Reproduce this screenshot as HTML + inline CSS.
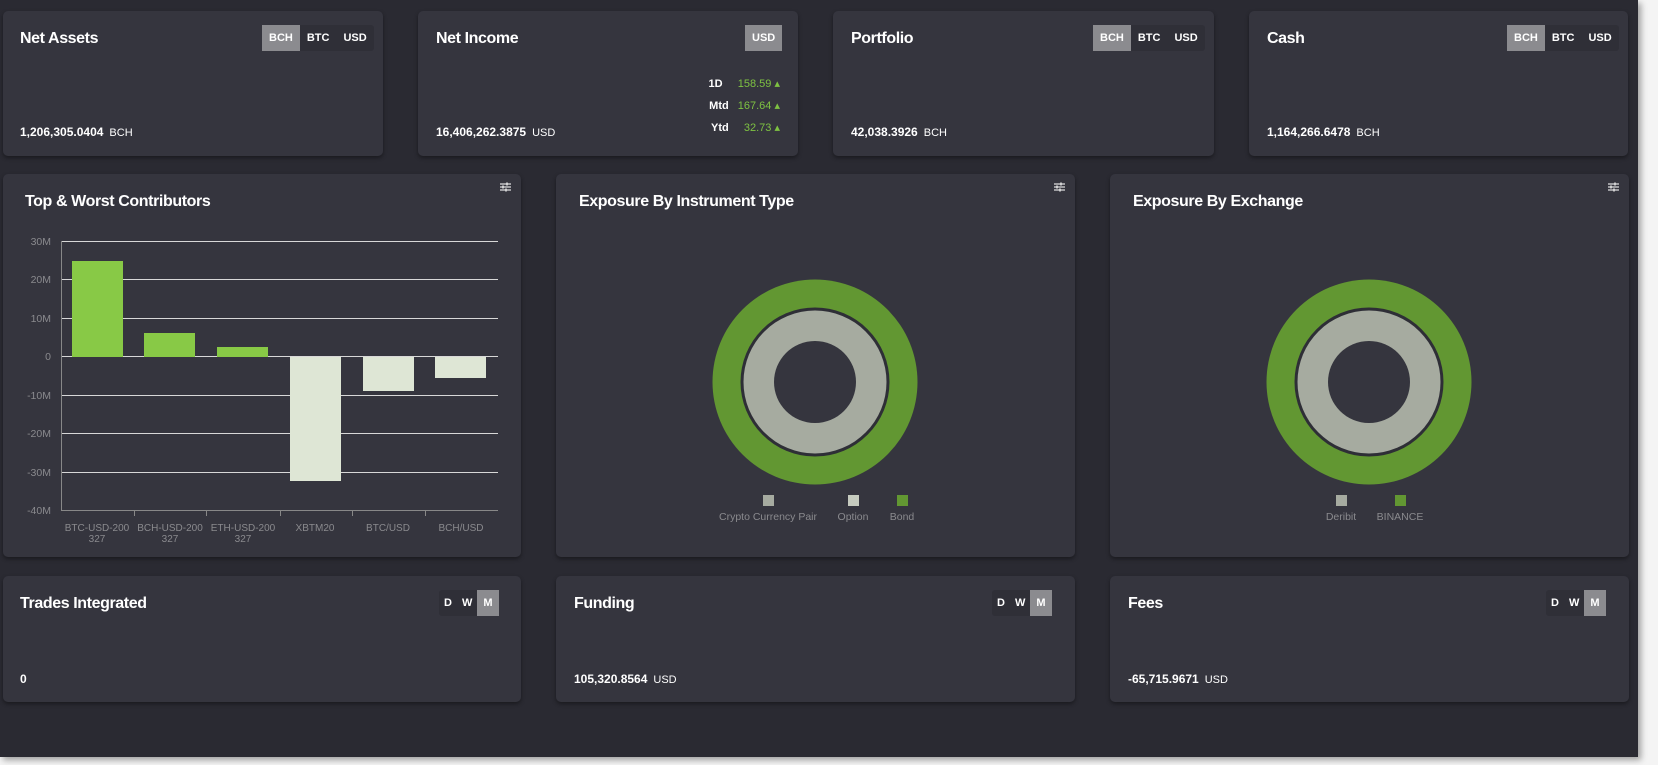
<!DOCTYPE html>
<html><head><meta charset="utf-8"><style>
*{box-sizing:border-box;margin:0;padding:0}
body{width:1658px;height:765px;background:#f4f4f4;position:relative;overflow:hidden;font-family:"Liberation Sans",sans-serif;color:#fff}
#bg{position:absolute;left:0;top:0;width:1638px;height:757px;background:#2a2a32;box-shadow:3px 3px 6px rgba(0,0,0,.35)}
.card{position:absolute;background:#35353e;border-radius:5px;box-shadow:0 2px 4px rgba(0,0,0,.4)}
.t{position:absolute;font-weight:bold;font-size:16px;letter-spacing:-0.4px}
.v{position:absolute;font-weight:bold;font-size:12px}
.v span{font-weight:normal;font-size:11px;margin-left:6px}
.tg{position:absolute;top:14px;height:26px;background:#2f2f37;border-radius:3px;display:flex;font-size:11px;font-weight:bold}
.tg div{padding:0 7px;line-height:26px}
.tg .on{background:#8b8b8f}
.ni{position:absolute;font-size:11px;font-weight:bold;right:18px}
.ni b{color:#7ec242;font-weight:normal;margin-left:6px}
.ic{position:absolute;top:8px;right:10px;width:11px;height:10px}
</style></head><body>
<div id="bg"></div>

<div class="card" style="left:3px;top:11px;width:380px;height:145px">
<div class="t" style="left:17px;top:19px">Net Assets</div>
<div class="tg" style="left:259px"><div class="on">BCH</div><div>BTC</div><div>USD</div></div>
<div class="v" style="left:17px;top:114px">1,206,305.0404<span>BCH</span></div></div>

<div class="card" style="left:418px;top:11px;width:380px;height:145px">
<div class="t" style="left:18px;top:19px">Net Income</div>
<div class="tg" style="left:327px"><div class="on">USD</div></div>
<div class="ni" style="top:66px">1D &nbsp;&nbsp;<b>158.59 ▴</b></div>
<div class="ni" style="top:88px">Mtd <b>167.64 ▴</b></div>
<div class="ni" style="top:110px">Ytd &nbsp;&nbsp;<b>32.73 ▴</b></div>
<div class="v" style="left:18px;top:114px">16,406,262.3875<span>USD</span></div></div>

<div class="card" style="left:833px;top:11px;width:381px;height:145px">
<div class="t" style="left:18px;top:19px">Portfolio</div>
<div class="tg" style="left:260px"><div class="on">BCH</div><div>BTC</div><div>USD</div></div>
<div class="v" style="left:18px;top:114px">42,038.3926<span>BCH</span></div></div>

<div class="card" style="left:1249px;top:11px;width:379px;height:145px">
<div class="t" style="left:18px;top:19px">Cash</div>
<div class="tg" style="left:258px"><div class="on">BCH</div><div>BTC</div><div>USD</div></div>
<div class="v" style="left:18px;top:114px">1,164,266.6478<span>BCH</span></div></div>

<div class="card" style="left:3px;top:174px;width:518px;height:383px">
<div class="t" style="left:22px;top:19px">Top &amp; Worst Contributors</div>
<svg class="ic" viewBox="0 0 11 10"><g stroke="#ddd" stroke-width="1.3"><path d="M0 2h11M0 5h11M0 8h11"/><path d="M7 0.5v3M3 3.5v3M6 6.5v3" stroke-width="1.6"/></g></svg>
</div>
<svg style="position:absolute;left:0;top:0" width="1658" height="765" font-family="Liberation Sans, sans-serif">
<g stroke="#d8d8d8" stroke-width="1">
<path d="M61 241.5H498M61 279.5H498M61 318.5H498M61 356.5H498M61 395.5H498M61 433.5H498M61 472.5H498"/>
</g>
<path d="M61.5 241V510.5H498M134.5 510v6M206.5 510v6M280.5 510v6M352.5 510v6M425.5 510v6" stroke="#888" fill="none"/>
<g fill="#88c946"><rect x="72" y="261" width="51" height="96"/><rect x="144" y="333" width="51" height="24"/><rect x="217" y="347" width="51" height="10"/></g>
<g fill="#dee6d5"><rect x="290" y="357" width="51" height="124"/><rect x="363" y="357" width="51" height="34"/><rect x="435" y="357" width="51" height="21"/></g>
<g fill="#8a8a8e" font-size="10.5" text-anchor="end">
<text x="51" y="245">30M</text><text x="51" y="283">20M</text><text x="51" y="322">10M</text><text x="51" y="360">0</text><text x="51" y="399">-10M</text><text x="51" y="437">-20M</text><text x="51" y="476">-30M</text><text x="51" y="514">-40M</text></g>
<g fill="#8a8a8e" font-size="10" text-anchor="middle">
<text x="97" y="531">BTC-USD-200</text><text x="97" y="542">327</text>
<text x="170" y="531">BCH-USD-200</text><text x="170" y="542">327</text>
<text x="243" y="531">ETH-USD-200</text><text x="243" y="542">327</text>
<text x="315" y="531">XBTM20</text><text x="388" y="531">BTC/USD</text><text x="461" y="531">BCH/USD</text></g>
</svg>

<div class="card" style="left:556px;top:174px;width:519px;height:383px">
<div class="t" style="left:23px;top:19px">Exposure By Instrument Type</div>
<svg class="ic" viewBox="0 0 11 10"><g stroke="#ddd" stroke-width="1.3"><path d="M0 2h11M0 5h11M0 8h11"/><path d="M7 0.5v3M3 3.5v3M6 6.5v3" stroke-width="1.6"/></g></svg>
</div>
<div class="card" style="left:1110px;top:174px;width:519px;height:383px">
<div class="t" style="left:23px;top:19px">Exposure By Exchange</div>
<svg class="ic" viewBox="0 0 11 10"><g stroke="#ddd" stroke-width="1.3"><path d="M0 2h11M0 5h11M0 8h11"/><path d="M7 0.5v3M3 3.5v3M6 6.5v3" stroke-width="1.6"/></g></svg>
</div>
<svg style="position:absolute;left:0;top:0" width="1658" height="765" font-family="Liberation Sans, sans-serif">
<g id="d"><circle cx="815" cy="382" r="102.5" fill="#629732"/><circle cx="815" cy="382" r="74.5" fill="#2e2e36"/><circle cx="815" cy="382" r="71.5" fill="#a6aba0"/><circle cx="815" cy="382" r="41" fill="#35353e"/></g>
<use href="#d" x="554"/>
<rect x="763" y="495" width="11" height="11" fill="#a6aba0"/><rect x="848" y="495" width="11" height="11" fill="#c6cbbf"/><rect x="897" y="495" width="11" height="11" fill="#629732"/>
<g fill="#8a8a8e" font-size="10.5" text-anchor="middle"><text x="768" y="520">Crypto Currency Pair</text><text x="853" y="520">Option</text><text x="902" y="520">Bond</text>
<text x="1341" y="520">Deribit</text><text x="1400" y="520">BINANCE</text></g>
<rect x="1336" y="495" width="11" height="11" fill="#a6aba0"/><rect x="1395" y="495" width="11" height="11" fill="#629732"/>
</svg>

<div class="card" style="left:3px;top:576px;width:518px;height:126px">
<div class="t" style="left:17px;top:19px">Trades Integrated</div>
<div class="tg" style="left:436px;top:14px"><div style="padding:0 5px">D</div><div style="padding:0 5px">W</div><div class="on" style="padding:0 6px">M</div></div>
<div class="v" style="left:17px;top:96px">0</div></div>
<div class="card" style="left:556px;top:576px;width:519px;height:126px">
<div class="t" style="left:18px;top:19px">Funding</div>
<div class="tg" style="left:436px;top:14px"><div style="padding:0 5px">D</div><div style="padding:0 5px">W</div><div class="on" style="padding:0 6px">M</div></div>
<div class="v" style="left:18px;top:96px">105,320.8564<span>USD</span></div></div>
<div class="card" style="left:1110px;top:576px;width:519px;height:126px">
<div class="t" style="left:18px;top:19px">Fees</div>
<div class="tg" style="left:436px;top:14px"><div style="padding:0 5px">D</div><div style="padding:0 5px">W</div><div class="on" style="padding:0 6px">M</div></div>
<div class="v" style="left:18px;top:96px">-65,715.9671<span>USD</span></div></div>
</body></html>
